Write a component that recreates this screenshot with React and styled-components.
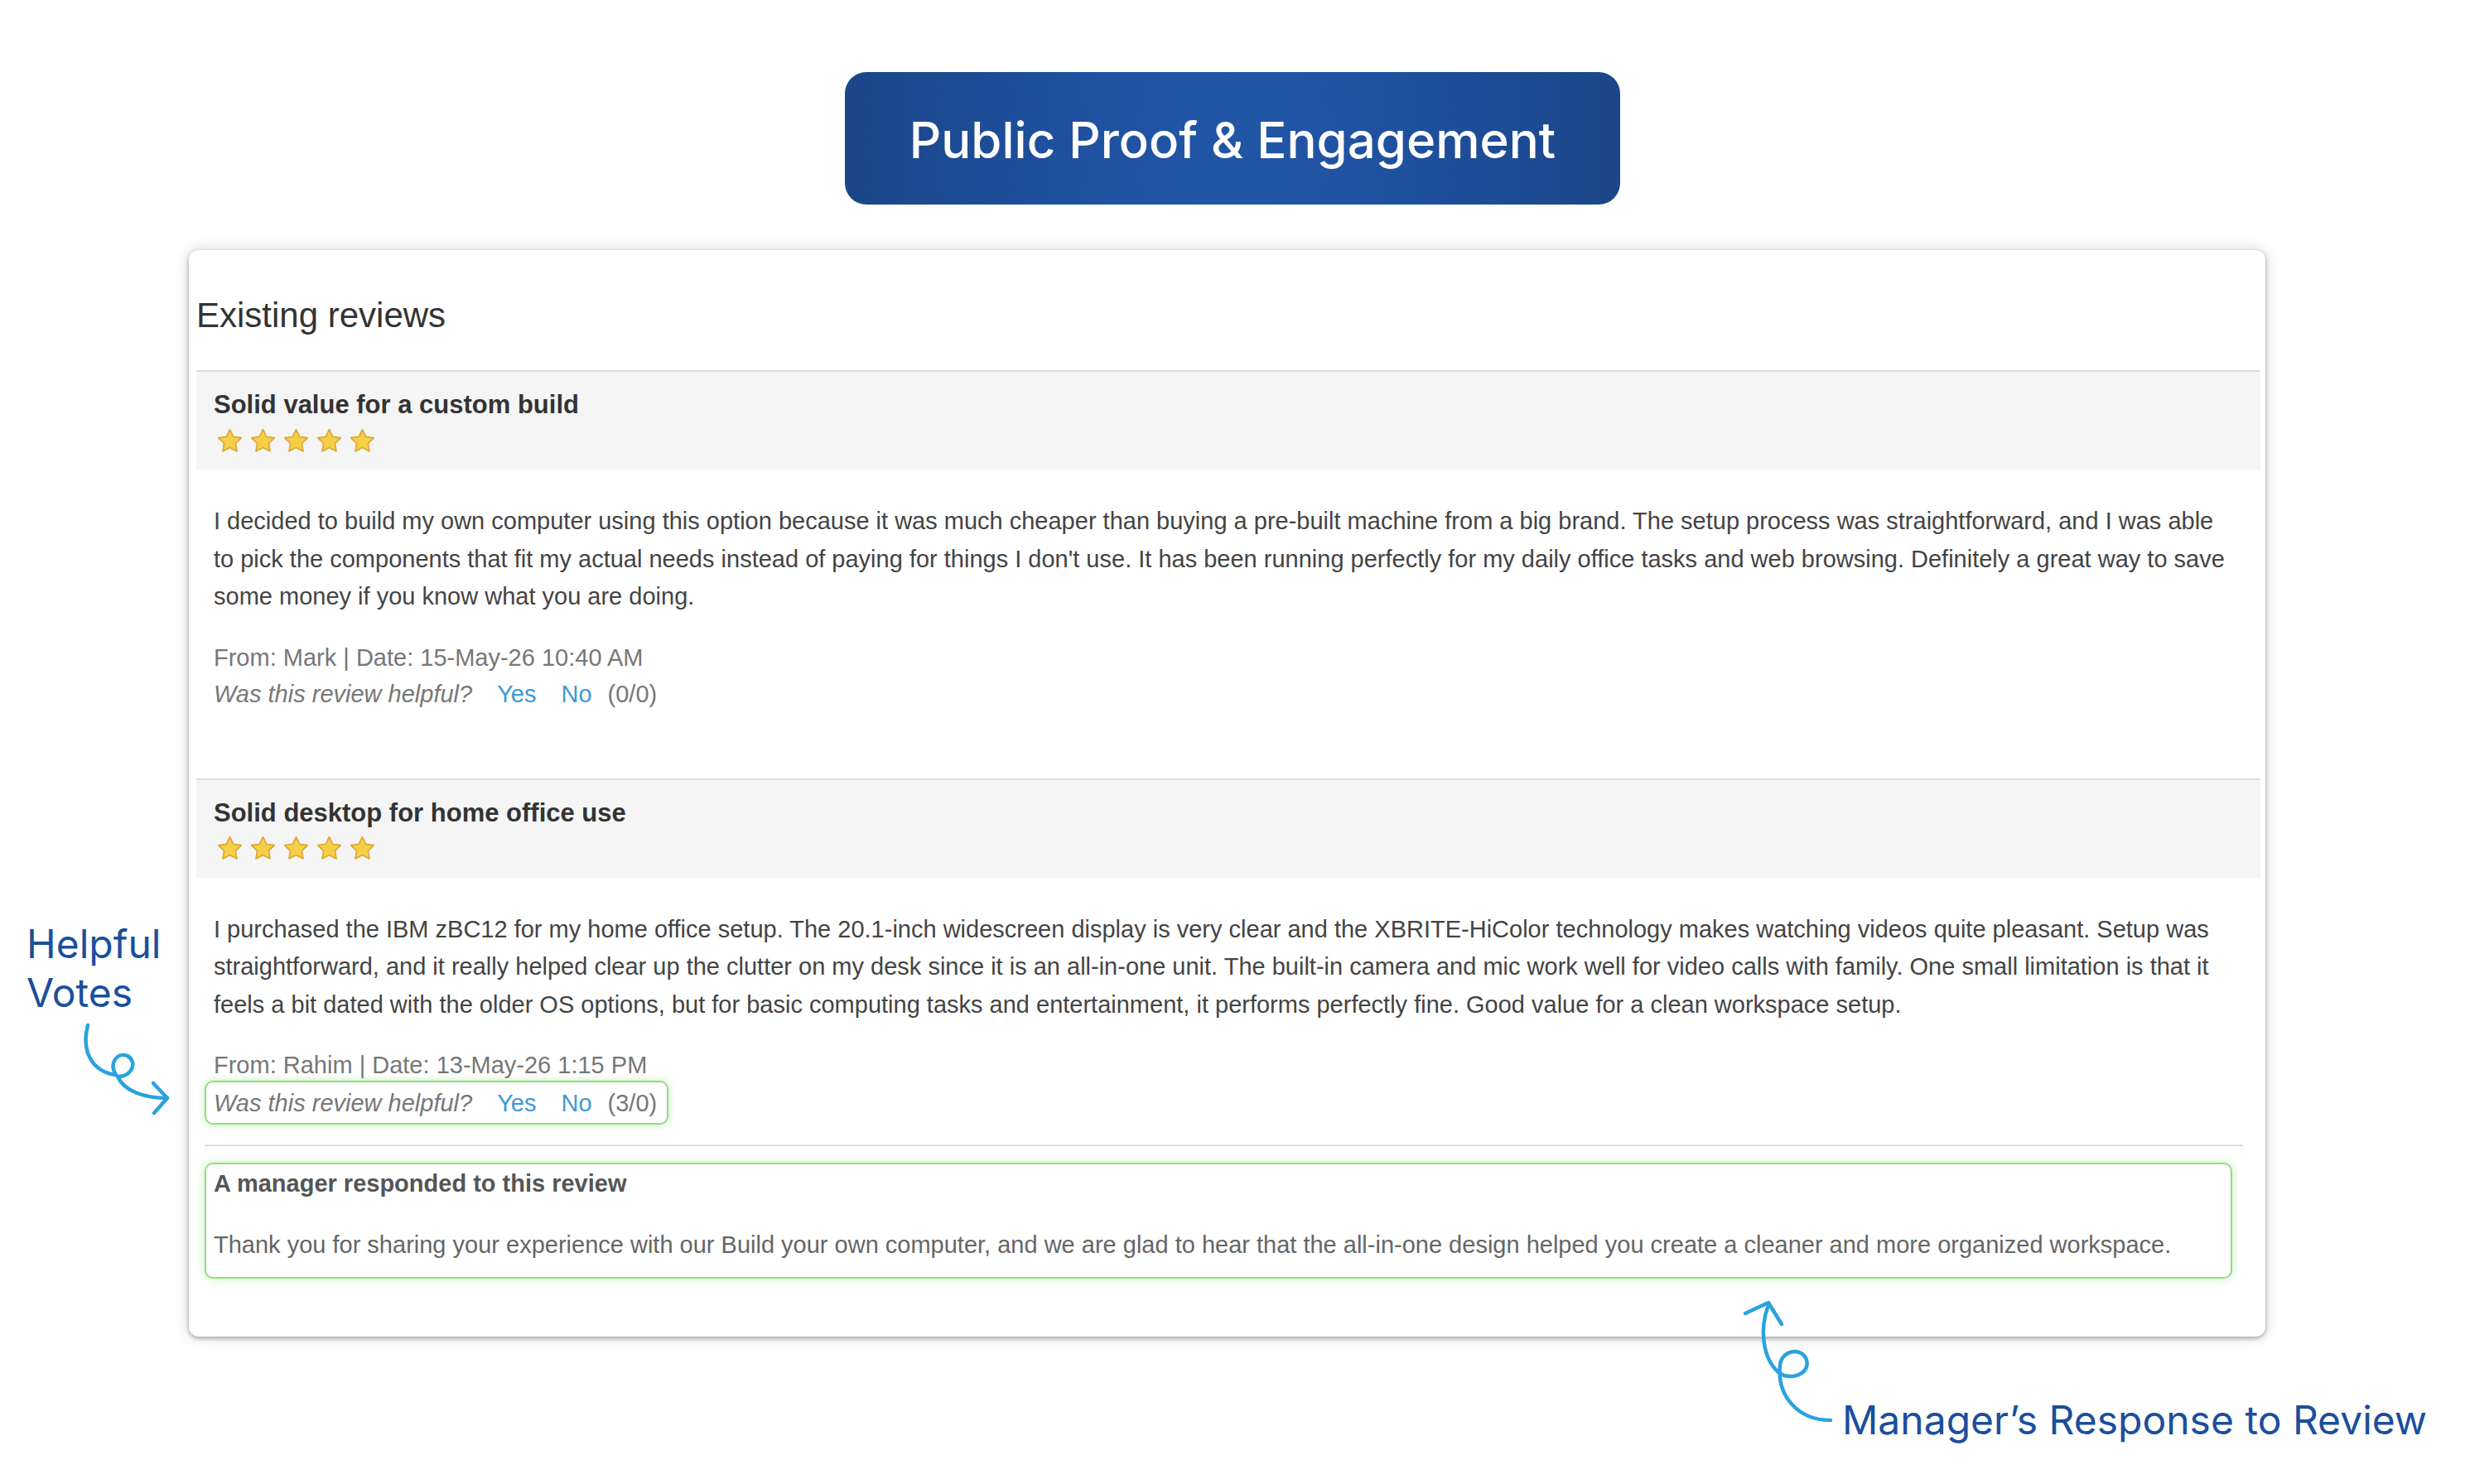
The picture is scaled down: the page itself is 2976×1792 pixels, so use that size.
import React from "react";
import styled, { createGlobalStyle } from "styled-components";

const GlobalStyle = createGlobalStyle`
  html, body {
    margin: 0;
    padding: 0;
    background: #ffffff;
  }
  body {
    font-family: "Liberation Sans", Arial, sans-serif;
  }
`;

const reviews = [
  {
    id: 1,
    title: "Solid value for a custom build",
    rating: 5,
    body:
      "I decided to build my own computer using this option because it was much cheaper than buying a pre-built machine from a big brand. The setup process was straightforward, and I was able to pick the components that fit my actual needs instead of paying for things I don't use. It has been running perfectly for my daily office tasks and web browsing. Definitely a great way to save some money if you know what you are doing.",
    from: "Mark",
    date: "15-May-26 10:40 AM",
    votes: "(0/0)",
    response: null,
  },
  {
    id: 2,
    title: "Solid desktop for home office use",
    rating: 5,
    body:
      "I purchased the IBM zBC12 for my home office setup. The 20.1-inch widescreen display is very clear and the XBRITE-HiColor technology makes watching videos quite pleasant. Setup was straightforward, and it really helped clear up the clutter on my desk since it is an all-in-one unit. The built-in camera and mic work well for video calls with family. One small limitation is that it feels a bit dated with the older OS options, but for basic computing tasks and entertainment, it performs perfectly fine. Good value for a clean workspace setup.",
    from: "Rahim",
    date: "13-May-26 1:15 PM",
    votes: "(3/0)",
    response:
      "Thank you for sharing your experience with our Build your own computer, and we are glad to hear that the all-in-one design helped you create a cleaner and more organized workspace.",
  },
];

const Star = () => (
  <svg width="33" height="33" viewBox="0 0 24 24">
    <polygon
      points="12,2 15.09,8.26 22,9.27 17,14.14 18.18,21.02 12,17.77 5.82,21.02 7,14.14 2,9.27 8.91,8.26"
      fill="#f7cf45"
      stroke="#dcaa3a"
      strokeWidth="1.3"
      strokeLinejoin="round"
    />
  </svg>
);

const Stars = ({ rating }) => (
  <StarRow>
    {Array.from({ length: rating }).map((_, i) => (
      <Star key={i} />
    ))}
  </StarRow>
);

const ReviewCard = ({ review, last }) => {
  return (
    <Section>
      <Header>
        <Title>{review.title}</Title>
        <Stars rating={review.rating} />
      </Header>
      <Content $last={last}>
        <Body>{review.body}</Body>
        <Meta>
          From: {review.from} | Date: {review.date}
        </Meta>
        <Helpful $highlight={!!review.response}>
          <Question>Was this review helpful?</Question>
          <VoteLink>Yes</VoteLink>
          <VoteLink>No</VoteLink>
          <Count>{review.votes}</Count>
        </Helpful>
      </Content>
      {review.response && (
        <ResponseArea>
          <ResponseBox>
            <ResponseHead>A manager responded to this review</ResponseHead>
            <ResponseText>{review.response}</ResponseText>
          </ResponseBox>
        </ResponseArea>
      )}
    </Section>
  );
};

const App = () => {
  return (
    <Page>
      <GlobalStyle />
      <Banner>Public Proof &amp; Engagement</Banner>
      <Card>
        <Heading>Existing reviews</Heading>
        <List>
          {reviews.map((r, i) => (
            <ReviewCard key={r.id} review={r} last={i === reviews.length - 1} />
          ))}
        </List>
      </Card>

      <Note $left={32} $top={1110}>
        Helpful
        <br />
        Votes
      </Note>
      <Arrow width="140" height="140" viewBox="90 1225 140 140" $left={90} $top={1225}>
        <path
          d="M106,1238 C98,1268 110,1294 140,1298 C131,1283 142,1270 154,1275 C166,1282 160,1300 142,1300 C150,1318 175,1326 202,1326"
          fill="none"
          stroke="#2aa2df"
          strokeWidth="4.5"
          strokeLinecap="round"
        />
        <path
          d="M185,1308 L202,1326 L186,1344"
          fill="none"
          stroke="#2aa2df"
          strokeWidth="4.5"
          strokeLinecap="round"
          strokeLinejoin="round"
        />
      </Arrow>

      <Arrow width="140" height="170" viewBox="2095 1560 140 170" $left={2095} $top={1560}>
        <path
          d="M2135,1576 C2124,1605 2128,1640 2147,1657 C2160,1668 2186,1660 2181,1642 C2176,1627 2152,1629 2149,1648 C2145,1685 2170,1715 2210,1715"
          fill="none"
          stroke="#2aa2df"
          strokeWidth="4.5"
          strokeLinecap="round"
        />
        <path
          d="M2107,1586 L2135,1573 L2151,1599"
          fill="none"
          stroke="#2aa2df"
          strokeWidth="4.5"
          strokeLinecap="round"
          strokeLinejoin="round"
        />
      </Arrow>
      <Note $left={2224} $top={1685}>
        Manager’s Response to Review
      </Note>
    </Page>
  );
};

export default App;

const Page = styled.div`
  position: relative;
  width: 2976px;
  height: 1792px;
  overflow: hidden;
  padding-top: 87px;
  box-sizing: border-box;
`;

const Banner = styled.div`
  width: 936px;
  height: 160px;
  margin: 0 auto;
  border-radius: 26px;
  background: linear-gradient(90deg, #1b4688 0%, #1f51a0 30%, #2156a6 50%, #1f51a0 70%, #1b4688 100%);
  color: #ffffff;
  font-family: Inter, "Noto Sans", sans-serif;
  font-size: 60px;
  font-weight: 500;
  padding-top: 3px;
  box-sizing: border-box;
  display: flex;
  align-items: center;
  justify-content: center;
`;

const Card = styled.div`
  margin-top: 55px;
  margin-left: 228px;
  width: 2507px;
  box-sizing: border-box;
  padding: 55px 6px 70px 9px;
  background: #ffffff;
  border-radius: 12px;
  box-shadow: 0 2px 5px rgba(0, 0, 0, 0.3), 0 0 18px rgba(0, 0, 0, 0.18);
`;

const Heading = styled.h2`
  margin: 0 0 42px 0;
  font-size: 42px;
  line-height: 48px;
  font-weight: 400;
  color: #333333;
`;

const List = styled.div`
  display: flex;
  flex-direction: column;
`;

const Section = styled.div`
  border-top: 2px solid #dddddd;
`;

const Header = styled.div`
  background: #f5f5f5;
  padding: 22px 21px 18px;
`;

const Title = styled.div`
  font-size: 31px;
  line-height: 36px;
  font-weight: 700;
  color: #333333;
`;

const StarRow = styled.div`
  display: flex;
  gap: 7px;
  margin-top: 8px;
  padding-left: 3px;
  height: 34px;
  align-items: center;
`;

const Content = styled.div`
  padding: 40px 32px ${(p) => (p.$last ? "0" : "80px")} 21px;
`;

const Body = styled.p`
  margin: 0;
  font-size: 29px;
  line-height: 45.5px;
  color: #444444;
`;

const Meta = styled.div`
  margin-top: 28px;
  font-size: 29px;
  line-height: 44px;
  color: #777777;
`;

const Helpful = styled.div`
  display: inline-flex;
  align-items: baseline;
  font-size: 29px;
  line-height: 44px;
  color: #777777;
  box-sizing: border-box;
  ${(p) =>
    p.$highlight
      ? `
    margin-left: -11px;
    margin-top: -3px;
    padding: 3px 12px 2px 9px;
    border: 2px solid #8fdf80;
    border-radius: 10px;
    box-shadow: 0 0 10px rgba(120, 215, 100, 0.45);
  `
      : ""}
`;

const Question = styled.span`
  font-style: italic;
`;

const VoteLink = styled.span`
  margin-left: 30px;
  color: #3d99d6;
  cursor: pointer;
`;

const Count = styled.span`
  margin-left: 19px;
`;

const ResponseArea = styled.div`
  margin: 24px 21px 0 10px;
  padding-top: 20px;
  border-top: 2px solid #dddddd;
`;

const ResponseBox = styled.div`
  margin-right: 13px;
  padding: 5px 12px 16px 9px;
  border: 2px solid #8fdf80;
  border-radius: 10px;
  box-shadow: 0 0 12px rgba(120, 215, 100, 0.4);
`;

const ResponseHead = styled.div`
  font-size: 29px;
  line-height: 36px;
  font-weight: 700;
  color: #555555;
`;

const ResponseText = styled.div`
  margin-top: 34px;
  font-size: 29px;
  line-height: 45px;
  color: #666666;
`;

const Note = styled.div`
  position: absolute;
  left: ${(p) => p.$left}px;
  top: ${(p) => p.$top}px;
  font-family: Inter, "Noto Sans", sans-serif;
  font-size: 48px;
  line-height: 59px;
  color: #1a4f9c;
  white-space: nowrap;
`;

const Arrow = styled.svg`
  position: absolute;
  left: ${(p) => p.$left}px;
  top: ${(p) => p.$top}px;
  overflow: visible;
`;
